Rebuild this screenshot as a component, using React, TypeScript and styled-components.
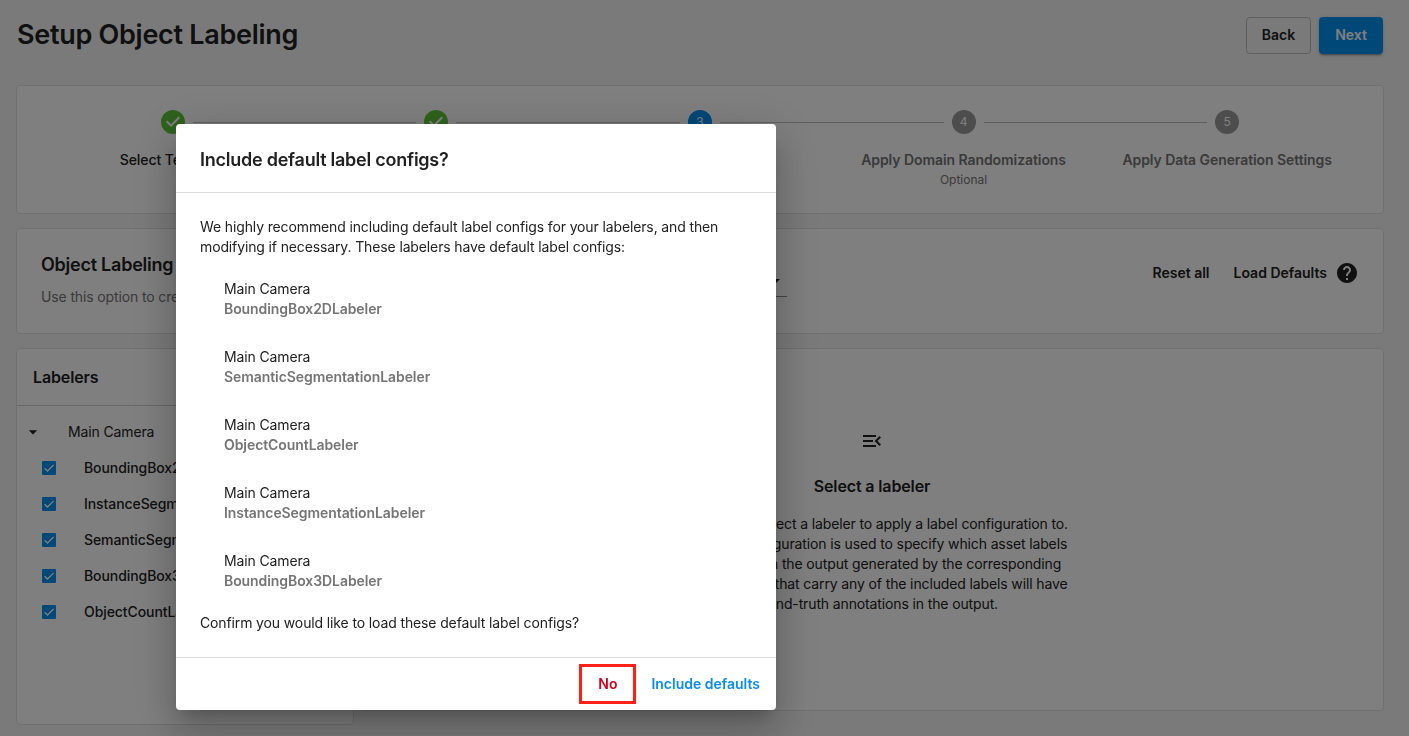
import React from "react";
import styled, { createGlobalStyle } from "styled-components";

const GlobalStyle = createGlobalStyle`
  *, *::before, *::after { box-sizing: border-box; }
  body {
    margin: 0;
    background: #f5f5f5;
    color: #212121;
    font-family: Inter, "Liberation Sans", sans-serif;
    font-size: 14px;
    line-height: 20px;
    letter-spacing: -0.13px;
    overflow: hidden;
    -webkit-font-smoothing: antialiased;
  }
  h1, h2, h3, p, ul { margin: 0; padding: 0; }
  ul { list-style: none; }
  button { font-family: inherit; cursor: pointer; letter-spacing: 0; }
`;

const BLUE = "#0090f0";

const Page = styled.div`
  height: 736px;
  padding: 17px 25px 0 16px;
  display: flex;
  flex-direction: column;
  overflow: hidden;
`;

const Header = styled.header`
  display: flex;
  justify-content: space-between;
  align-items: flex-start;
  height: 68px;
  padding-right: 1px;
`;

const PageTitle = styled.h1`
  font-size: 27px;
  font-weight: 600;
  line-height: 36px;
  letter-spacing: -0.28px;
  padding-left: 1px;
`;

const HeaderActions = styled.div`
  display: flex;
  gap: 8px;
`;

const Button = styled.button<{ $primary?: boolean }>`
  height: 37px;
  width: ${(p) => (p.$primary ? 64 : 65)}px;
  padding: 0 0 2px;
  border-radius: 4px;
  border: ${(p) => (p.$primary ? "none" : "1px solid #bdbdbd")};
  background: ${(p) => (p.$primary ? BLUE : "transparent")};
  color: ${(p) => (p.$primary ? "#fff" : "#212121")};
  box-shadow: ${(p) =>
    p.$primary
      ? "0 3px 1px -2px rgba(0,0,0,.2), 0 2px 2px 0 rgba(0,0,0,.14), 0 1px 5px 0 rgba(0,0,0,.12)"
      : "none"};
  font-size: 14px;
  font-weight: 600;
`;

const Card = styled.section`
  background: #fff;
  border: 1px solid #e0e0e0;
  border-radius: 4px;
`;

const StepperCard = styled(Card)`
  height: 129px;
  padding: 24px;
  display: flex;
`;

const Step = styled.div`
  flex: 1;
  display: flex;
  flex-direction: column;
  align-items: center;
`;

const StepRail = styled.div`
  width: 100%;
  display: grid;
  grid-template-columns: 1fr 24px 1fr;
  column-gap: 8px;
  align-items: center;
  height: 24px;
  margin-bottom: 16px;
`;

const RailLine = styled.span<{ $hidden?: boolean }>`
  height: 1px;
  margin-top: 1px;
  background: #bdbdbd;
  visibility: ${(p) => (p.$hidden ? "hidden" : "visible")};
`;

const StepBadge = styled.span<{ $active?: boolean }>`
  width: 24px;
  height: 24px;
  border-radius: 50%;
  background: ${(p) => (p.$active ? BLUE : "#9a9a9a")};
  color: #fff;
  font-size: 12px;
  line-height: 24px;
  text-align: center;
`;

const StepLabel = styled.span<{ $weight: number; $muted?: boolean }>`
  font-weight: ${(p) => p.$weight};
  color: ${(p) => (p.$muted ? "#757575" : "#212121")};
  letter-spacing: -0.075px;
  white-space: nowrap;
`;

const StepHint = styled.span`
  font-size: 12px;
  letter-spacing: 0;
  color: #757575;
`;

const OptionsCard = styled(Card)`
  height: 106px;
  margin-top: 14px;
  padding: 24px;
  display: flex;
  align-items: flex-start;
`;

const OptionsIntro = styled.div`
  width: 546px;
  overflow: hidden;
  white-space: nowrap;
`;

const OptionsTitle = styled.h2`
  font-size: 18px;
  font-weight: 600;
  line-height: 24px;
  letter-spacing: -0.24px;
  margin-bottom: 10px;
`;

const Muted = styled.p`
  color: #757575;
`;

const Select = styled.div`
  width: 200px;
  height: 32px;
  margin-top: 12px;
  display: flex;
  align-items: center;
  justify-content: flex-end;
  border-bottom: 1px solid #8a8a8a;
`;

const OptionsActions = styled.div`
  margin-left: auto;
  margin-top: 10px;
  display: flex;
  align-items: center;
  height: 20px;
`;

const TextButton = styled.button`
  border: 0;
  background: none;
  padding: 0;
  margin-right: 24px;
  color: #212121;
  font-size: 14px;
  font-weight: 600;
  line-height: 20px;
  &:last-of-type { margin-right: 8px; }
`;

const Columns = styled.div`
  display: flex;
  gap: 6px;
  margin-top: 14px;
  align-items: flex-start;
`;

const LabelersCard = styled(Card)`
  width: 338px;
  height: 377px;
`;

const LabelersTitle = styled.h3`
  height: 57px;
  padding-left: 16px;
  border-bottom: 1px solid #d0d0d0;
  font-size: 16px;
  font-weight: 600;
  line-height: 56px;
`;

const Tree = styled.ul`
  padding-top: 8px;
`;

const TreeGroup = styled.li`
  height: 36px;
  display: flex;
  align-items: center;
  padding-left: 6px;
  gap: 25px;
`;

const TreeItem = styled.li`
  height: 36px;
  display: flex;
  align-items: center;
  padding-left: 25px;
  gap: 28px;
  font-weight: 500;
  letter-spacing: -0.08px;
`;

const EmptyCard = styled(Card)`
  flex: 1;
  height: 363px;
  display: flex;
  flex-direction: column;
  align-items: center;
  padding-top: 80px;
  text-align: center;
`;

const EmptyTitle = styled.h3`
  font-size: 16px;
  font-weight: 600;
  line-height: 24px;
  margin: 21px 0 16px;
`;

const EmptyText = styled.p`
  white-space: pre-line;
`;

const Backdrop = styled.div`
  position: fixed;
  inset: 0;
  background: rgba(0, 0, 0, 0.5);
  display: flex;
  align-items: flex-start;
  padding: 124px 0 0 176px;
`;

const Dialog = styled.div`
  width: 600px;
  height: 586px;
  display: flex;
  flex-direction: column;
  background: #fff;
  border-radius: 4px;
  box-shadow: 0 11px 15px -7px rgba(0, 0, 0, 0.2),
    0 24px 38px 3px rgba(0, 0, 0, 0.14), 0 9px 46px 8px rgba(0, 0, 0, 0.12);
`;

const DialogTitle = styled.h2`
  height: 69px;
  padding: 24px 24px 0;
  border-bottom: 1px solid #dcdcdc;
  font-size: 18px;
  font-weight: 600;
  line-height: 24px;
  letter-spacing: -0.24px;
`;

const DialogBody = styled.div`
  flex: 1;
  padding: 24px 24px 0;
`;

const ConfigList = styled.ul`
  padding: 22px 24px;
  display: flex;
  flex-direction: column;
  gap: 28px;
`;

const ConfigName = styled.p`
  font-weight: 600;
  letter-spacing: -0.075px;
  color: #757575;
`;

const DialogFooter = styled.footer`
  height: 53px;
  border-top: 1px solid #dcdcdc;
  display: flex;
  justify-content: flex-end;
  align-items: center;
  padding: 0 16px 1px 0;
  gap: 15px;
`;

const FooterButton = styled.button<{ $danger?: boolean }>`
  height: 40px;
  padding: ${(p) => (p.$danger ? "0 16px" : "0")};
  border: ${(p) => (p.$danger ? "3px solid #fb2018" : "0")};
  background: none;
  color: ${(p) => (p.$danger ? "#d0021b" : "#0b8bea")};
  font-size: 14px;
  font-weight: 600;
  white-space: nowrap;
`;

const Icon = ({ d, size = 24, color = "#212121" }: { d: string; size?: number; color?: string }) => (
  <svg width={size} height={size} viewBox="0 0 24 24" fill={color} display="block">
    <path d={d} />
  </svg>
);

const PATHS = {
  done: "M12 0a12 12 0 1 0 0 24 12 12 0 0 0 0-24zm-2 17l-5-5 1.4-1.4 3.6 3.6 7.6-7.6L19 8l-9 9z",
  help: "M12 2C6.48 2 2 6.48 2 12s4.48 10 10 10 10-4.48 10-10S17.52 2 12 2zm1 17h-2v-2h2v2zm2.07-7.75l-.9.92C13.45 12.9 13 13.5 13 15h-2v-.5c0-1.1.45-2.1 1.17-2.83l1.24-1.26c.37-.36.59-.86.59-1.41 0-1.1-.9-2-2-2s-2 .9-2 2H8c0-2.21 1.79-4 4-4s4 1.79 4 4c0 .88-.36 1.68-.93 2.25z",
  menuOpen:
    "M3 18h13v-2H3v2zm0-5h10v-2H3v2zm0-7v2h13V6H3zm18 9.59L17.42 12 21 8.41 19.59 7l-5 5 5 5L21 15.59z",
  dropDown: "M7 10l5 5 5-5z",
};

const Checkbox = () => (
  <svg width="14" height="14" viewBox="0 0 14 14" fill="none">
    <rect width="14" height="14" rx="1" fill={BLUE} />
    <path d="M2.6 7.2 5.5 10 11.6 3.9" stroke="#fff" strokeWidth="1.3" />
  </svg>
);

const steps = [
  { label: "Select Template", state: "done" },
  { label: "Select Assets", state: "done" },
  { label: "Setup Object Labeling", state: "active" },
  { label: "Apply Domain Randomizations", state: "todo", hint: "Optional" },
  { label: "Apply Data Generation Settings", state: "todo" },
];

const labelers = [
  "BoundingBox2DLabeler",
  "InstanceSegmentationLabeler",
  "SemanticSegmentationLabeler",
  "BoundingBox3DLabeler",
  "ObjectCountLabeler",
];

const defaultConfigs = [
  "BoundingBox2DLabeler",
  "SemanticSegmentationLabeler",
  "ObjectCountLabeler",
  "InstanceSegmentationLabeler",
  "BoundingBox3DLabeler",
];

export default function App() {
  return (
    <>
      <GlobalStyle />
      <Page>
        <Header>
          <PageTitle>Setup Object Labeling</PageTitle>
          <HeaderActions>
            <Button>Back</Button>
            <Button $primary>Next</Button>
          </HeaderActions>
        </Header>

        <StepperCard>
          {steps.map((s, i) => (
            <Step key={s.label}>
              <StepRail>
                <RailLine $hidden={i === 0} />
                {s.state === "done" ? (
                  <Icon d={PATHS.done} color="#5ec639" />
                ) : (
                  <StepBadge $active={s.state === "active"}>{i + 1}</StepBadge>
                )}
                <RailLine $hidden={i === steps.length - 1} />
              </StepRail>
              <StepLabel $weight={s.state === "done" ? 500 : 600} $muted={s.state === "todo"}>
                {s.label}
              </StepLabel>
              {s.hint && <StepHint>{s.hint}</StepHint>}
            </Step>
          ))}
        </StepperCard>

        <OptionsCard>
          <OptionsIntro>
            <OptionsTitle>Object Labeling</OptionsTitle>
            <Muted>Use this option to create label configurations</Muted>
          </OptionsIntro>
          <Select>
            <Icon d={PATHS.dropDown} />
          </Select>
          <OptionsActions>
            <TextButton>Reset all</TextButton>
            <TextButton>Load Defaults</TextButton>
            <Icon d={PATHS.help} />
          </OptionsActions>
        </OptionsCard>

        <Columns>
          <LabelersCard>
            <LabelersTitle>Labelers</LabelersTitle>
            <Tree>
              <TreeGroup>
                <Icon d={PATHS.dropDown} size={20} />
                <span>Main Camera</span>
              </TreeGroup>
              {labelers.map((name) => (
                <TreeItem key={name}>
                  <Checkbox />
                  <span>{name}</span>
                </TreeItem>
              ))}
            </Tree>
          </LabelersCard>
          <EmptyCard>
            <Icon d={PATHS.menuOpen} />
            <EmptyTitle>Select a labeler</EmptyTitle>
            <EmptyText>
              {"You need to select a labeler to apply a label configuration to.\nThe label configuration is used to specify which asset labels\nare included in the output generated by the corresponding\nlabeler. Assets that carry any of the included labels will have\nground-truth annotations in the output."}
            </EmptyText>
          </EmptyCard>
        </Columns>
      </Page>

      <Backdrop>
        <Dialog role="dialog" aria-modal="true">
          <DialogTitle>Include default label configs?</DialogTitle>
          <DialogBody>
            <p>
              We highly recommend including default label configs for your labelers, and then
              modifying if necessary. These labelers have default label configs:
            </p>
            <ConfigList>
              {defaultConfigs.map((name) => (
                <li key={name}>
                  <p>Main Camera</p>
                  <ConfigName>{name}</ConfigName>
                </li>
              ))}
            </ConfigList>
            <p>Confirm you would like to load these default label configs?</p>
          </DialogBody>
          <DialogFooter>
            <FooterButton $danger>No</FooterButton>
            <FooterButton>Include defaults</FooterButton>
          </DialogFooter>
        </Dialog>
      </Backdrop>
    </>
  );
}
